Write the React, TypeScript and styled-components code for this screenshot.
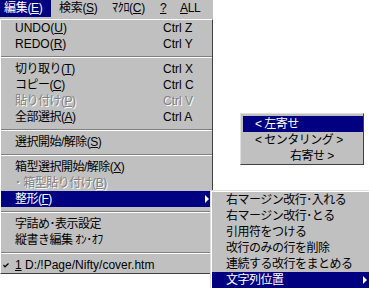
import React from 'react';
import styled, { createGlobalStyle } from 'styled-components';

const GlobalStyle = createGlobalStyle`
  html, body { margin: 0; padding: 0; background: #fff; overflow: hidden; }
  body { font-family: "Liberation Sans", "Noto Sans CJK JP", sans-serif; color: #000; }
`;

const NAVY = '#000080';
const FACE = '#c0c0c0';

const Screen = styled.div`
  position: relative;
  width: 369px;
  height: 288px;
  overflow: hidden;
  background: #fff;
`;

const MenuBar = styled.div`
  display: flex;
  align-items: flex-start;
  width: 213px;
  height: 19px;
  background: ${FACE};
  font-size: 12px;
`;

const BarItem = styled.div<{ $active?: boolean; $w: number; $pad?: number }>`
  box-sizing: border-box;
  width: ${p => p.$w}px;
  height: 17px;
  line-height: 17px;
  padding-left: ${p => p.$pad ?? 4}px;
  white-space: nowrap;
  letter-spacing: -0.3px;
  background: ${p => (p.$active ? NAVY : 'transparent')};
  color: ${p => (p.$active ? '#fff' : '#000')};
`;

const Panel = styled.div<{ $left: number; $top: number; $width: number }>`
  position: absolute;
  left: ${p => p.$left}px;
  top: ${p => p.$top}px;
  width: ${p => p.$width}px;
  box-sizing: border-box;
  display: flex;
  flex-direction: column;
  background: ${FACE};
  border-top: 1px solid #fff;
  border-left: 1px solid #fff;
  border-right: 1px solid #404040;
  border-bottom: 1px solid #404040;
`;

const SubPanel = styled(Panel)`
  border-top-color: #dfdfdf;
  border-left-color: #dfdfdf;
  box-shadow: inset 1px 1px 0 #fff;
  padding: 1px 0 0 1px;
`;

const FloatPanel = styled(Panel)`
  border-top-color: #dfdfdf;
  border-left-color: #dfdfdf;
  padding: 2px 0 0 2px;
`;

const Row = styled.div<{ $active?: boolean; $disabled?: boolean; $pad?: number }>`
  position: relative;
  display: grid;
  grid-template-columns: 148px 1fr;
  align-items: center;
  height: 16px;
  line-height: 16px;
  padding-left: ${p => (p.$pad ?? 14)}px;
  font-size: 12px;
  letter-spacing: -0.5px;
  white-space: nowrap;
  background: ${p => (p.$active ? NAVY : 'transparent')};
  color: ${p => (p.$active ? '#fff' : p.$disabled ? '#808080' : '#000')};
  text-shadow: ${p => (p.$disabled ? '1px 1px 0 #fff' : 'none')};
`;

const Latin = styled.span`
  font-family: "Liberation Sans", sans-serif;
  font-size: 12px;
  letter-spacing: 0;
`;

const Shortcut = styled.span`
  font-family: "Liberation Sans", sans-serif;
  font-size: 12px;
  letter-spacing: 0;
`;

const Separator = styled.div`
  height: 9px;
  box-sizing: border-box;
  padding-top: 4px;
  &::after {
    content: '';
    display: block;
    border-top: 1px solid #808080;
    border-bottom: 1px solid #fff;
  }
`;

const Arrow = styled.span<{ $right: number }>`
  position: absolute;
  right: ${p => p.$right}px;
  top: 4px;
  width: 0;
  height: 0;
  border-top: 4px solid transparent;
  border-bottom: 4px solid transparent;
  border-left: 4px solid #fff;
`;

const Check = styled.svg`
  position: absolute;
  left: 2px;
  top: 6px;
`;

const M = styled.u`
  text-decoration-thickness: 1px;
  text-underline-offset: 1px;
`;

export default function App() {
  return (
    <Screen>
      <GlobalStyle />
      <MenuBar>
        <BarItem $active $w={51}>編集(<M>E</M>)</BarItem>
        <BarItem $w={57} $pad={8}>検索(<M>S</M>)</BarItem>
        <BarItem $w={48}>ﾏｸﾛ(<M>C</M>)</BarItem>
        <BarItem $w={20}><M>?</M></BarItem>
        <BarItem $w={37}><M>A</M>LL</BarItem>
      </MenuBar>

      <Panel $left={0} $top={19} $width={213}>
        <Row><Latin>UNDO(<M>U</M>)</Latin><Shortcut>Ctrl Z</Shortcut></Row>
        <Row><Latin>REDO(<M>R</M>)</Latin><Shortcut>Ctrl Y</Shortcut></Row>
        <Separator />
        <Row><span>切り取り(<M>T</M>)</span><Shortcut>Ctrl X</Shortcut></Row>
        <Row><span>コピー(<M>C</M>)</span><Shortcut>Ctrl C</Shortcut></Row>
        <Row $disabled><span>貼り付け(<M>P</M>)</span><Shortcut>Ctrl V</Shortcut></Row>
        <Row><span>全部選択(<M>A</M>)</span><Shortcut>Ctrl A</Shortcut></Row>
        <Separator />
        <Row><span>選択開始/解除(<M>S</M>)</span></Row>
        <Separator />
        <Row><span>箱型選択開始/解除(<M>X</M>)</span></Row>
        <Row $disabled><span>･ 箱型貼り付け(<M>B</M>)</span></Row>
        <Row $active><span>整形(<M>F</M>)</span><Arrow $right={3} /></Row>
        <Separator />
        <Row><span>字詰め･表示設定</span></Row>
        <Row><span>縦書き編集 ｵﾝ･ｵﾌ</span></Row>
        <Separator />
        <Row>
          <Check width="6" height="5" viewBox="0 0 6 5">
            <polyline points="0.5,2 2,3.8 5.5,0.5" fill="none" stroke="#000" strokeWidth="1.2" />
          </Check>
          <Latin><M>1</M> D:/!Page/Nifty/cover.htm</Latin>
        </Row>
      </Panel>

      <SubPanel $left={210} $top={190} $width={162}>
        <Row><span>右マージン改行･入れる</span></Row>
        <Row><span>右マージン改行･とる</span></Row>
        <Row><span>引用符をつける</span></Row>
        <Row><span>改行のみの行を削除</span></Row>
        <Row><span>連続する改行をまとめる</span></Row>
        <Row $active><span>文字列位置</span><Arrow $right={4} /></Row>
      </SubPanel>

      <FloatPanel $left={240} $top={113} $width={124}>
        <Row $active $pad={12}><span>&lt; 左寄せ</span></Row>
        <Row $pad={12}><span>&lt; センタリング &gt;</span></Row>
        <Row $pad={47}><span>右寄せ &gt;</span></Row>
      </FloatPanel>
    </Screen>
  );
}
